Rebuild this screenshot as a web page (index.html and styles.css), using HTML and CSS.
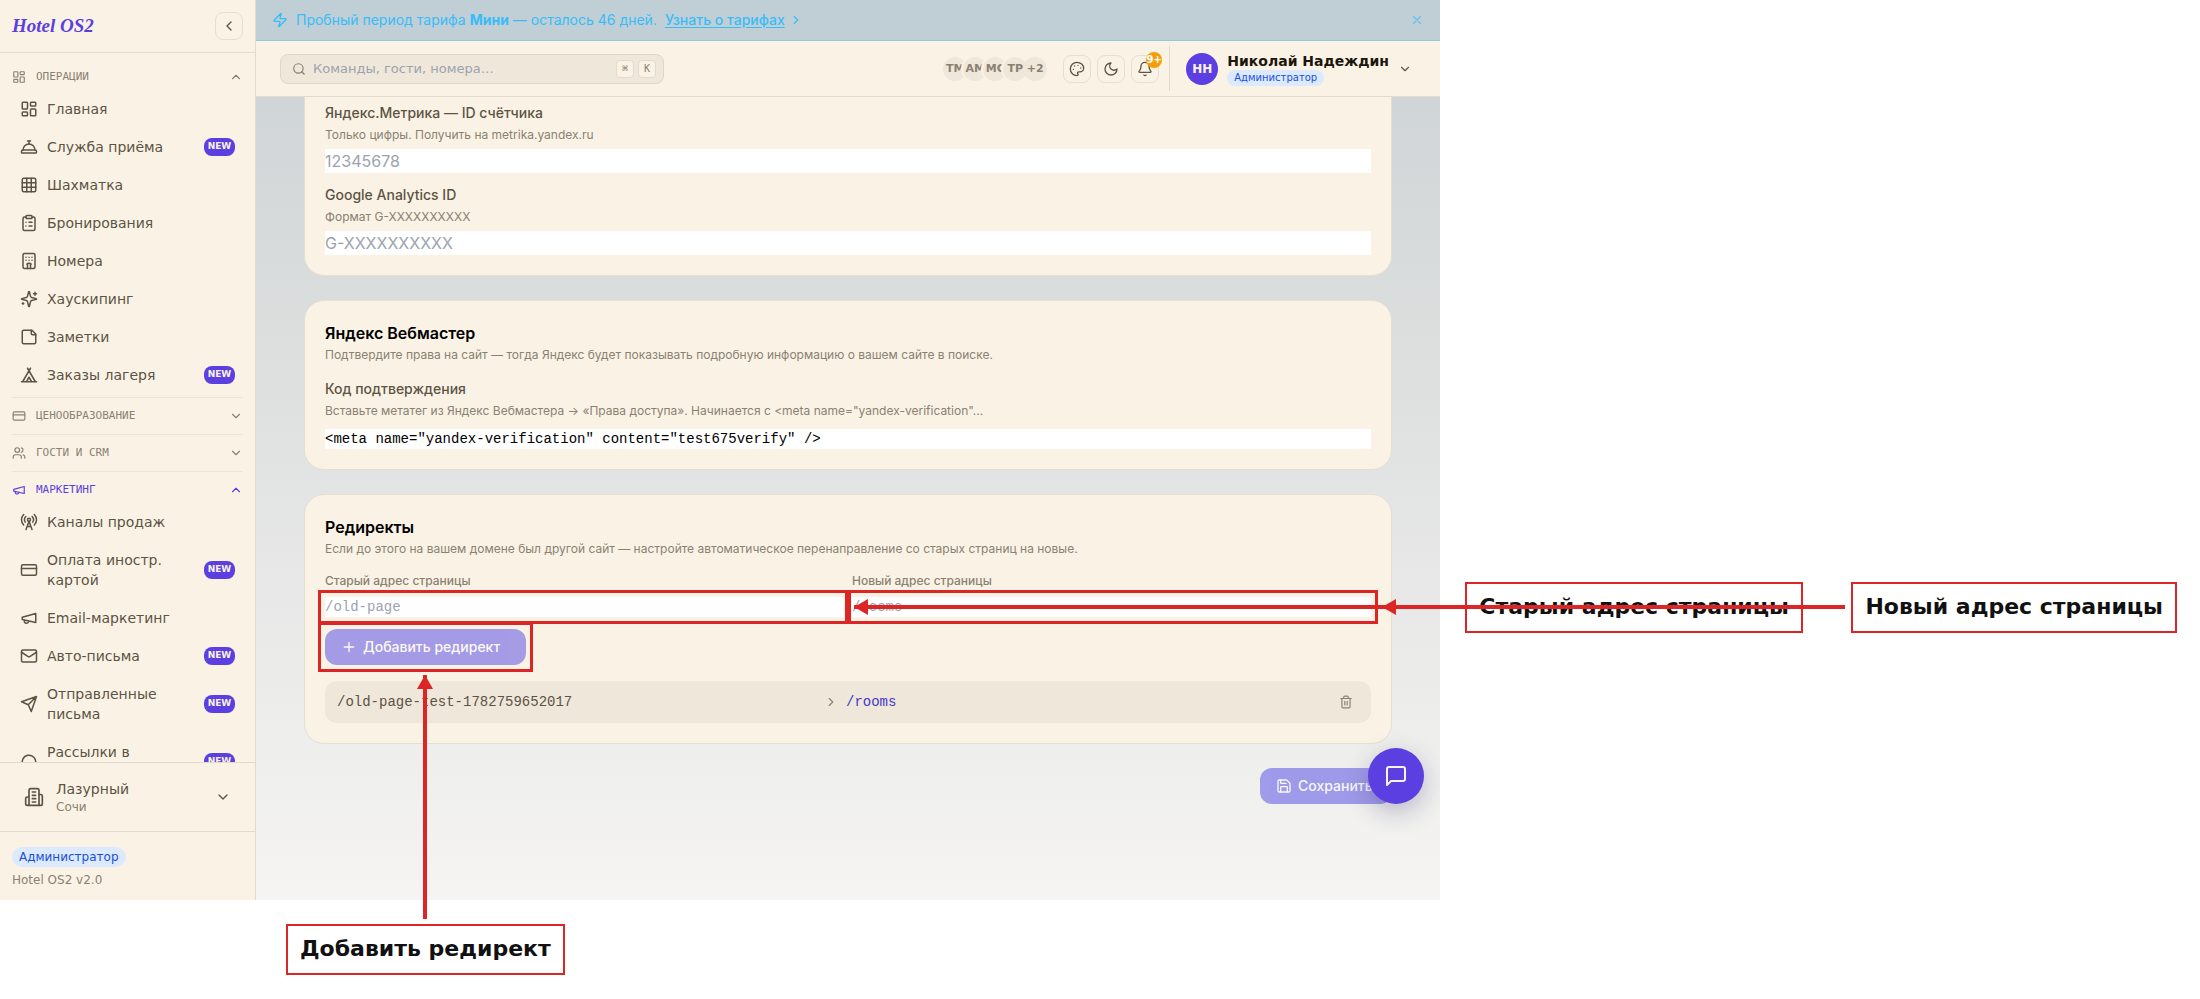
FILE: index.html
```html
<!DOCTYPE html>
<html lang="ru">
<head>
  <meta charset="UTF-8">
  <title>Hotel OS2</title>
  <link rel="stylesheet" href="styles.css">
</head>
<body>

<!-- icon set -->
<svg class="sprite" width="0" height="0" aria-hidden="true">
  <symbol id="i-dashboard" viewBox="0 0 24 24"><rect x="3" y="3" width="7" height="9" rx="1"/><rect x="14" y="3" width="7" height="5" rx="1"/><rect x="14" y="12" width="7" height="9" rx="1"/><rect x="3" y="16" width="7" height="5" rx="1"/></symbol>
  <symbol id="i-bell-service" viewBox="0 0 24 24"><path d="M3 20a1 1 0 0 1-1-1v-1a2 2 0 0 1 2-2h16a2 2 0 0 1 2 2v1a1 1 0 0 1-1 1Z"/><path d="M20 16a8 8 0 1 0-16 0"/><path d="M12 4v4"/><path d="M10 4h4"/></symbol>
  <symbol id="i-grid" viewBox="0 0 24 24"><rect x="3" y="3" width="18" height="18" rx="2"/><path d="M3 9h18M3 15h18M9 3v18M15 3v18"/></symbol>
  <symbol id="i-clipboard" viewBox="0 0 24 24"><rect x="8" y="2" width="8" height="4" rx="1"/><path d="M16 4h2a2 2 0 0 1 2 2v14a2 2 0 0 1-2 2H6a2 2 0 0 1-2-2V6a2 2 0 0 1 2-2h2"/><path d="M12 11h4M12 16h4M8 11h.01M8 16h.01"/></symbol>
  <symbol id="i-hotel" viewBox="0 0 24 24"><rect x="4" y="2" width="16" height="20" rx="2"/><path d="M10 22v-6.570M14 15.430V22M15 16a5 5 0 0 0-6 0"/><path d="M12 11h.01M12 7h.01M16 11h.01M16 7h.01M8 11h.01M8 7h.01"/></symbol>
  <symbol id="i-sparkles" viewBox="0 0 24 24"><path d="M9.937 15.500A2 2 0 0 0 8.500 14.063l-6.135-1.582a.5.5 0 0 1 0-.962L8.500 9.936A2 2 0 0 0 9.937 8.500l1.582-6.135a.5.5 0 0 1 .963 0L14.063 8.500A2 2 0 0 0 15.500 9.937l6.135 1.581a.5.5 0 0 1 0 .964L15.500 14.063a2 2 0 0 0-1.437 1.437l-1.582 6.135a.5.5 0 0 1-.963 0z"/><path d="M20 3v4M22 5h-4M4 17v2M5 18H3"/></symbol>
  <symbol id="i-note" viewBox="0 0 24 24"><path d="M16 3H5a2 2 0 0 0-2 2v14a2 2 0 0 0 2 2h14a2 2 0 0 0 2-2V8Z"/><path d="M15 3v4a2 2 0 0 0 2 2h4"/></symbol>
  <symbol id="i-tent" viewBox="0 0 24 24"><path d="M3.500 21 14 3M20.500 21 10 3M15.500 21 12 15l-3.500 6M2 21h20"/></symbol>
  <symbol id="i-card" viewBox="0 0 24 24"><rect x="2" y="5" width="20" height="14" rx="2"/><path d="M2 10h20"/></symbol>
  <symbol id="i-users" viewBox="0 0 24 24"><path d="M16 21v-2a4 4 0 0 0-4-4H6a4 4 0 0 0-4 4v2"/><circle cx="9" cy="7" r="4"/><path d="M22 21v-2a4 4 0 0 0-3-3.870M16 3.130a4 4 0 0 1 0 7.750"/></symbol>
  <symbol id="i-megaphone" viewBox="0 0 24 24"><path d="m3 11 18-5v12L3 14v-3z"/><path d="M11.600 16.800a3 3 0 1 1-5.800-1.600"/></symbol>
  <symbol id="i-tower" viewBox="0 0 24 24"><path d="M4.900 16.100C1 12.200 1 5.800 4.900 1.900M7.800 4.700a6.140 6.140 0 0 0-.8 7.500"/><circle cx="12" cy="9" r="2"/><path d="M16.200 4.800c2 2 2.260 5.110.8 7.470M19.100 1.900a9.960 9.960 0 0 1 0 14.100M9.500 18h5M8 22l4-11 4 11"/></symbol>
  <symbol id="i-mail" viewBox="0 0 24 24"><rect x="2" y="4" width="20" height="16" rx="2"/><path d="m22 7-8.970 5.700a1.940 1.940 0 0 1-2.060 0L2 7"/></symbol>
  <symbol id="i-send" viewBox="0 0 24 24"><path d="M22 2 11 13M22 2l-7 20-4-9-9-4z"/></symbol>
  <symbol id="i-message-circle" viewBox="0 0 24 24"><path d="M7.900 20A9 9 0 1 0 4 16.100L2 22Z"/></symbol>
  <symbol id="i-building" viewBox="0 0 24 24"><path d="M6 22V4a2 2 0 0 1 2-2h8a2 2 0 0 1 2 2v18Z"/><path d="M6 12H4a2 2 0 0 0-2 2v6a2 2 0 0 0 2 2h2M18 9h2a2 2 0 0 1 2 2v9a2 2 0 0 1-2 2h-2M10 6h4M10 10h4M10 14h4M10 18h4"/></symbol>
  <symbol id="i-zap" viewBox="0 0 24 24"><path d="M4 14a1 1 0 0 1-.780-1.630l9.900-10.200a.5.5 0 0 1 .860.460l-1.920 6.020A1 1 0 0 0 13 10h7a1 1 0 0 1 .780 1.630l-9.900 10.200a.5.5 0 0 1-.860-.460l1.920-6.020A1 1 0 0 0 11 14z"/></symbol>
  <symbol id="i-search" viewBox="0 0 24 24"><circle cx="11" cy="11" r="8"/><path d="m21 21-4.300-4.300"/></symbol>
  <symbol id="i-palette" viewBox="0 0 24 24"><path d="M13.500 6.500h.01M17.500 10.500h.01M8.500 7.500h.01M6.500 12.500h.01"/><path d="M12 2C6.500 2 2 6.500 2 12s4.500 10 10 10c.926 0 1.648-.746 1.648-1.688 0-.437-.180-.835-.437-1.125-.290-.289-.438-.652-.438-1.125a1.640 1.640 0 0 1 1.668-1.668h1.996c3.051 0 5.555-2.503 5.555-5.554C21.965 6.012 17.461 2 12 2z"/></symbol>
  <symbol id="i-moon" viewBox="0 0 24 24"><path d="M12 3a6 6 0 0 0 9 9 9 9 0 1 1-9-9Z"/></symbol>
  <symbol id="i-bell" viewBox="0 0 24 24"><path d="M10.268 21a2 2 0 0 0 3.464 0"/><path d="M3.262 15.326A1 1 0 0 0 4 17h16a1 1 0 0 0 .740-1.673C19.410 13.956 18 12.499 18 8A6 6 0 0 0 6 8c0 4.499-1.411 5.956-2.738 7.326"/></symbol>
  <symbol id="i-save" viewBox="0 0 24 24"><path d="M15.200 3a2 2 0 0 1 1.400.6l3.800 3.800a2 2 0 0 1 .6 1.400V19a2 2 0 0 1-2 2H5a2 2 0 0 1-2-2V5a2 2 0 0 1 2-2z"/><path d="M17 21v-7a1 1 0 0 0-1-1H8a1 1 0 0 0-1 1v7M7 3v4a1 1 0 0 0 1 1h7"/></symbol>
  <symbol id="i-trash" viewBox="0 0 24 24"><path d="M3 6h18M19 6v14a2 2 0 0 1-2 2H7a2 2 0 0 1-2-2V6M8 6V4a2 2 0 0 1 2-2h4a2 2 0 0 1 2 2v2M10 11v6M14 11v6"/></symbol>
  <symbol id="i-message" viewBox="0 0 24 24"><path d="M21 15a2 2 0 0 1-2 2H7l-4 4V5a2 2 0 0 1 2-2h14a2 2 0 0 1 2 2z"/></symbol>
  <symbol id="i-plus" viewBox="0 0 24 24"><path d="M5 12h14M12 5v14"/></symbol>
  <symbol id="i-x" viewBox="0 0 24 24"><path d="M18 6 6 18M6 6l12 12"/></symbol>
  <symbol id="i-up" viewBox="0 0 24 24"><path d="m18 15-6-6-6 6"/></symbol>
  <symbol id="i-down" viewBox="0 0 24 24"><path d="m6 9 6 6 6-6"/></symbol>
  <symbol id="i-left" viewBox="0 0 24 24"><path d="m15 18-6-6 6-6"/></symbol>
  <symbol id="i-right" viewBox="0 0 24 24"><path d="m9 18 6-6-6-6"/></symbol>
</svg>

<div class="sheet">
  <div class="app">

    <aside class="sidebar">
      <div class="brand">
        <a href="#" class="logo">Hotel OS2</a>
        <button type="button" class="icon-btn" aria-label="Свернуть меню"><svg class="icon s16"><use href="#i-left"/></svg></button>
      </div>

      <nav class="nav">
        <section class="nav-section">
          <button type="button" class="nav-head"><svg class="icon s14"><use href="#i-dashboard"/></svg><span>Операции</span><svg class="icon s14"><use href="#i-up"/></svg></button>
          <a href="#" class="nav-item"><svg class="icon s18"><use href="#i-dashboard"/></svg><span>Главная</span></a>
          <a href="#" class="nav-item"><svg class="icon s18"><use href="#i-bell-service"/></svg><span>Служба приёма</span><b class="new">NEW</b></a>
          <a href="#" class="nav-item"><svg class="icon s18"><use href="#i-grid"/></svg><span>Шахматка</span></a>
          <a href="#" class="nav-item"><svg class="icon s18"><use href="#i-clipboard"/></svg><span>Бронирования</span></a>
          <a href="#" class="nav-item"><svg class="icon s18"><use href="#i-hotel"/></svg><span>Номера</span></a>
          <a href="#" class="nav-item"><svg class="icon s18"><use href="#i-sparkles"/></svg><span>Хаускипинг</span></a>
          <a href="#" class="nav-item"><svg class="icon s18"><use href="#i-note"/></svg><span>Заметки</span></a>
          <a href="#" class="nav-item"><svg class="icon s18"><use href="#i-tent"/></svg><span>Заказы лагеря</span><b class="new">NEW</b></a>
        </section>

        <section class="nav-section">
          <button type="button" class="nav-head"><svg class="icon s14"><use href="#i-card"/></svg><span>Ценообразование</span><svg class="icon s14"><use href="#i-down"/></svg></button>
        </section>

        <section class="nav-section">
          <button type="button" class="nav-head"><svg class="icon s14"><use href="#i-users"/></svg><span>Гости и CRM</span><svg class="icon s14"><use href="#i-down"/></svg></button>
        </section>

        <section class="nav-section">
          <button type="button" class="nav-head active"><svg class="icon s14"><use href="#i-megaphone"/></svg><span>Маркетинг</span><svg class="icon s14"><use href="#i-up"/></svg></button>
          <a href="#" class="nav-item"><svg class="icon s18"><use href="#i-tower"/></svg><span>Каналы продаж</span></a>
          <a href="#" class="nav-item"><svg class="icon s18"><use href="#i-card"/></svg><span>Оплата иностр. картой</span><b class="new">NEW</b></a>
          <a href="#" class="nav-item"><svg class="icon s18"><use href="#i-megaphone"/></svg><span>Email-маркетинг</span></a>
          <a href="#" class="nav-item"><svg class="icon s18"><use href="#i-mail"/></svg><span>Авто-письма</span><b class="new">NEW</b></a>
          <a href="#" class="nav-item"><svg class="icon s18"><use href="#i-send"/></svg><span>Отправленные письма</span><b class="new">NEW</b></a>
          <a href="#" class="nav-item nav-item-tall"><svg class="icon s18"><use href="#i-message-circle"/></svg><span>Рассылки в</span><b class="new">NEW</b></a>
        </section>
      </nav>

      <button type="button" class="property">
        <svg class="icon s20"><use href="#i-building"/></svg>
        <span class="property-text">Лазурный<small>Сочи</small></span>
        <svg class="icon s16"><use href="#i-down"/></svg>
      </button>

      <div class="side-footer">
        <span class="role">Администратор</span>
        <span class="version">Hotel OS2 v2.0</span>
      </div>
    </aside>

    <div class="content">
      <div class="banner">
        <svg class="icon s16"><use href="#i-zap"/></svg>
        <span>Пробный период тарифа <strong>Мини</strong> — осталось 46 дней.</span>
        <a href="#">Узнать о тарифах</a>
        <svg class="icon s14"><use href="#i-right"/></svg>
        <button type="button" class="banner-close" aria-label="Закрыть"><svg class="icon s14"><use href="#i-x"/></svg></button>
      </div>

      <header class="topbar">
        <label class="search">
          <svg class="icon s14"><use href="#i-search"/></svg>
          <input type="text" placeholder="Команды, гости, номера…" aria-label="Поиск">
          <kbd>⌘</kbd><kbd>K</kbd>
        </label>
        <div class="team">
          <span>ТМ</span><span>АМ</span><span>МС</span><span>ТР</span><span>+2</span>
        </div>
        <div class="tools">
          <button type="button" class="icon-btn" aria-label="Тема"><svg class="icon s16"><use href="#i-palette"/></svg></button>
          <button type="button" class="icon-btn" aria-label="Ночной режим"><svg class="icon s16"><use href="#i-moon"/></svg></button>
          <button type="button" class="icon-btn" aria-label="Уведомления"><svg class="icon s16"><use href="#i-bell"/></svg><span class="count">9+</span></button>
        </div>
        <button type="button" class="user">
          <span class="avatar">НН</span>
          <span class="user-text"><strong>Николай Надеждин</strong><span class="role role-sm">Администратор</span></span>
          <svg class="icon s14"><use href="#i-down"/></svg>
        </button>
      </header>

      <main class="main">
        <section class="card card-cut">
          <div class="field">
            <label for="metrika">Яндекс.Метрика — ID счётчика</label>
            <p class="hint">Только цифры. Получить на metrika.yandex.ru</p>
            <input type="text" id="metrika" placeholder="12345678">
          </div>
          <div class="field">
            <label for="ga">Google Analytics ID</label>
            <p class="hint">Формат G-XXXXXXXXXX</p>
            <input type="text" id="ga" placeholder="G-XXXXXXXXXX">
          </div>
        </section>

        <section class="card">
          <h2>Яндекс Вебмастер</h2>
          <p class="hint">Подтвердите права на сайт — тогда Яндекс будет показывать подробную информацию о вашем сайте в поиске.</p>
          <div class="field field-code">
            <label for="verify">Код подтверждения</label>
            <p class="hint">Вставьте метатег из Яндекс Вебмастера → «Права доступа». Начинается с &lt;meta name="yandex-verification"...</p>
            <input type="text" id="verify" class="code" value='&lt;meta name="yandex-verification" content="test675verify" /&gt;'>
          </div>
        </section>

        <section class="card">
          <h2>Редиректы</h2>
          <p class="hint">Если до этого на вашем домене был другой сайт — настройте автоматическое перенаправление со старых страниц на новые.</p>
          <div class="pair">
            <div>
              <label for="from">Старый адрес страницы</label>
              <input type="text" id="from" class="code marked" placeholder="/old-page">
            </div>
            <div>
              <label for="to">Новый адрес страницы</label>
              <input type="text" id="to" class="code marked" placeholder="/rooms">
            </div>
          </div>
          <span class="add marked"><button type="button" class="btn btn-add" disabled><svg class="icon s16"><use href="#i-plus"/></svg>Добавить редирект</button></span>
          <div class="redirect">
            <span>/old-page-test-1782759652017</span>
            <svg class="icon s14"><use href="#i-right"/></svg>
            <span class="target">/rooms</span>
            <button type="button" aria-label="Удалить"><svg class="icon s14"><use href="#i-trash"/></svg></button>
          </div>
        </section>

        <div class="actions">
          <button type="button" class="btn" disabled><svg class="icon s16"><use href="#i-save"/></svg>Сохранить</button>
        </div>
        <button type="button" class="chat" aria-label="Чат"><svg class="icon s24"><use href="#i-message"/></svg></button>
      </main>
    </div>
  </div>

  <!-- callouts drawn over the screen -->
  <div class="callout callout-old">Старый адрес страницы</div>
  <div class="callout callout-new">Новый адрес страницы</div>
  <div class="callout callout-add">Добавить редирект</div>
  <div class="arrow arrow-old"></div>
  <div class="arrow arrow-new"></div>
  <div class="arrow-up"></div>
</div>

</body>
</html>
```

FILE: styles.css
```css
* {
  box-sizing: border-box;
}
body {
  margin: 0;
  background: #fff;
  color: #000;
  font-family: Inter, sans-serif;
  font-size: 14px;
  line-height: 20px;
}
button, input {
  font: inherit;
  color: inherit;
  border: none;
  margin: 0;
  padding: 0;
  background: none;
}
a {
  color: inherit;
  text-decoration: none;
}
h2, p {
  margin: 0;
}
.sprite {
  position: absolute;
}
.icon {
  flex: none;
  display: block;
  fill: none;
  stroke: currentColor;
  stroke-width: 2;
  stroke-linecap: round;
  stroke-linejoin: round;
}
.s14 { width: 14px; height: 14px; }
.s16 { width: 16px; height: 16px; }
.s18 { width: 18px; height: 18px; }
.s20 { width: 20px; height: 20px; }
.s24 { width: 24px; height: 24px; }

/* the app leaves a margin on the right and below for the callouts */
.sheet {
  position: relative;
  height: 100vh;
  padding: 0 760px 99px 0;
  overflow: hidden;
}
.app {
  display: flex;
  height: 100%;
  background: linear-gradient(#cbd1d5, #d8dbdb 28%, #f5f4f2);
}

/* sidebar */
.sidebar {
  width: 256px;
  flex: none;
  display: flex;
  flex-direction: column;
  background: #faf3e5;
  border-right: 1px solid #e2dacb;
  color: #5c5344;
  font-family: "DejaVu Sans", sans-serif;
}
.brand {
  display: flex;
  align-items: center;
  justify-content: space-between;
  padding: 12px;
  border-bottom: 1px solid #e2dacb;
}
.logo {
  font: italic bold 19px/24px "Liberation Serif", serif;
  color: #5b3fe0;
}
.icon-btn {
  position: relative;
  display: flex;
  align-items: center;
  justify-content: center;
  width: 28px;
  height: 28px;
  border: 1px solid #e6decf;
  border-radius: 8px;
}
.nav {
  flex: 1;
  min-height: 0;
  overflow: hidden;
  padding: 6px 12px 0;
}
.nav-section {
  display: flex;
  flex-direction: column;
  gap: 2px;
  padding-bottom: 4px;
}
.nav-section + .nav-section {
  border-top: 1px solid #ece4d6;
}
.nav-head {
  display: flex;
  align-items: center;
  gap: 10px;
  height: 30px;
  padding-top: 5px;
  color: #8a8172;
  font: 11px/14px "DejaVu Sans Mono", monospace;
  text-transform: uppercase;
}
.nav-head span {
  flex: 1;
  text-align: left;
}
.nav-head.active {
  color: #5b3fe0;
}
.nav-section:not(:has(.nav-item)) {
  padding-bottom: 6px;
}
.nav-item {
  display: flex;
  align-items: center;
  gap: 9px;
  padding: 8px;
}
.nav-item span {
  flex: 1;
}
.nav-item-tall span {
  min-height: 40px;
}
.new {
  width: 31px;
  height: 18px;
  border-radius: 8px;
  background: #5b3fe0;
  color: #faf3e5;
  font-size: 9px;
  line-height: 16px;
  text-align: center;
}
.property {
  display: flex;
  align-items: center;
  gap: 12px;
  height: 69px;
  padding: 0 24px;
  border-top: 1px solid #e2dacb;
}
.property-text {
  flex: 1;
  text-align: left;
}
.property small {
  display: block;
  font-size: 12px;
  line-height: 16px;
  color: #8a8172;
}
.side-footer {
  display: flex;
  flex-direction: column;
  align-items: flex-start;
  gap: 5px;
  padding: 15px 12px 12px;
  border-top: 1px solid #e2dacb;
}
.role {
  padding: 0 7px;
  border-radius: 10px;
  background: #dbeafe;
  color: #1d4ed8;
  font-size: 12px;
}
.role-sm {
  font-size: 10px;
  line-height: 16px;
}
.version {
  font-size: 12px;
  line-height: 16px;
  color: #8a8172;
}

/* banner and top bar */
.content {
  flex: 1;
  min-width: 0;
  display: flex;
  flex-direction: column;
}
.banner {
  display: flex;
  align-items: center;
  gap: 8px;
  height: 41px;
  padding: 0 16px;
  border-bottom: 1px solid #8ec9e4;
  background: #c0ced5;
  color: #38bdf8;
}
.banner a {
  font-weight: 500;
  text-decoration: underline;
  text-underline-offset: 2px;
}
.banner a + .icon {
  margin-left: -4px;
}
.banner-close {
  margin-left: auto;
  opacity: .7;
}
.topbar {
  display: flex;
  align-items: center;
  height: 56px;
  padding: 0 24px;
  background: #faf3e5;
  border-bottom: 1px solid #e2dacb;
  color: #5c5344;
  font-family: "DejaVu Sans", sans-serif;
}
.search {
  display: flex;
  align-items: center;
  gap: 4px;
  width: 384px;
  height: 30px;
  padding: 0 7px 0 11px;
  border: 1px solid #ddd5c7;
  border-radius: 8px;
  background: #efe7da;
  color: #8a8172;
}
.search input {
  flex: 1;
  min-width: 0;
  padding-left: 3px;
  font-size: 13px;
}
::placeholder {
  color: #9ca3af;
  opacity: 1;
}
kbd {
  width: 18px;
  height: 18px;
  border: 1px solid #e2dacb;
  border-radius: 4px;
  background: #faf3e5;
  font: 10px/16px "DejaVu Sans Mono", monospace;
  text-align: center;
}
.team {
  display: flex;
  margin-left: auto;
  margin-right: 16px;
}
.team span {
  width: 24px;
  height: 24px;
  border-radius: 50%;
  background: #efe7da;
  box-shadow: 0 0 0 2px #faf3e5;
  color: #8a8172;
  font-size: 11px;
  font-weight: bold;
  line-height: 24px;
  text-align: center;
}
.team span + span {
  margin-left: -4px;
}
.team span:last-child {
  box-shadow: none;
}
.tools {
  display: flex;
  gap: 6px;
}
.count {
  position: absolute;
  top: -4px;
  right: -4px;
  width: 16px;
  height: 16px;
  border-radius: 50%;
  background: #f59e0b;
  color: #fff;
  font-size: 10px;
  font-weight: bold;
  line-height: 16px;
}
.user {
  display: flex;
  align-items: center;
  gap: 9px;
  height: 45px;
  margin-left: 10px;
  padding: 0 4px 0 16px;
  border-left: 1px solid #e2dacb;
}
.avatar {
  width: 32px;
  height: 32px;
  border-radius: 50%;
  background: #5b3fe0;
  color: #faf3e5;
  font-size: 12px;
  font-weight: bold;
  line-height: 32px;
}
.user-text {
  display: flex;
  flex-direction: column;
  align-items: flex-start;
}
.user-text strong {
  color: #1c160d;
  line-height: 18px;
}

/* settings page */
.main {
  position: relative;
  flex: 1;
  min-height: 0;
  overflow: hidden;
  display: flex;
  flex-direction: column;
  gap: 24px;
  padding: 0 48px;
}
.card {
  flex: none;
  padding: 20px;
  border: 1px solid #e6decf;
  border-radius: 20px;
  background: #faf3e5;
}
.card-cut {
  display: flex;
  flex-direction: column;
  gap: 12px;
  padding-top: 6px;
  border-top: none;
  border-radius: 0 0 20px 20px;
}
h2 {
  margin-bottom: 2px;
  font-size: 16px;
  font-weight: 600;
  line-height: 24px;
}
.hint {
  font-size: 12px;
  line-height: 16px;
  color: #8a8172;
}
.field {
  display: flex;
  flex-direction: column;
}
.field label {
  margin-bottom: 4px;
  font-weight: 500;
  color: #5c5344;
}
.field input {
  height: 24px;
  margin-top: 6px;
  background: #fff;
  font-size: 16px;
}
.field-code {
  margin-top: 16px;
}
.code,
.field .code {
  width: 100%;
  height: 20px;
  background: #fff;
  font-family: "Liberation Mono", monospace;
  font-size: 14px;
}
.field .code {
  margin-top: 10px;
}
.pair {
  display: grid;
  grid-template-columns: 1fr 1fr;
  gap: 8px;
  margin: 16px 0 12px;
}
.pair label,
.pair input {
  display: block;
}
.pair label {
  margin-bottom: 8px;
  font-size: 12px;
  font-weight: 500;
  line-height: 16px;
  color: #8a8172;
}
.marked {
  outline: 3px solid #dc2626;
  outline-offset: 4px;
}
.add {
  display: block;
  width: fit-content;
}
.btn {
  display: flex;
  align-items: center;
  gap: 6px;
  min-width: 132px;
  height: 36px;
  padding: 0 16px;
  border-radius: 12px;
  background: #4f46e5;
  color: #fff;
  font-weight: 500;
  opacity: .5;
}
.btn-add {
  min-width: 201px;
}
.redirect {
  display: flex;
  align-items: center;
  gap: 8px;
  margin-top: 16px;
  padding: 8px 12px;
  border-radius: 12px;
  background: #efe7da;
  color: #5c5344;
  font-family: "Liberation Mono", monospace;
}
.redirect span {
  flex: 1;
}
.redirect .target {
  color: #4338ca;
}
.redirect button {
  padding: 6px;
}
.redirect .icon {
  color: #8a8172;
}
.actions {
  display: flex;
  justify-content: flex-end;
}
.chat {
  position: absolute;
  right: 16px;
  bottom: 96px;
  display: flex;
  align-items: center;
  justify-content: center;
  width: 56px;
  height: 56px;
  border-radius: 50%;
  background: #5b3fe0;
  color: #faf3e5;
  box-shadow: 0 8px 24px rgba(60, 50, 110, .3);
}

/* callouts */
.callout {
  position: absolute;
  padding: 11px 12px 12px;
  border: 2px solid #dc2626;
  background: #fff;
  color: #111;
  font: bold 22px/24px "DejaVu Sans", sans-serif;
  white-space: nowrap;
}
.callout-old {
  top: 582px;
  right: 397px;
}
.callout-new {
  top: 582px;
  right: 23px;
}
.callout-add {
  left: 286px;
  bottom: 24px;
}
.arrow {
  position: absolute;
  top: 605px;
  height: 4px;
  background: #dc2626;
}
.arrow::before {
  content: "";
  position: absolute;
  left: 0;
  top: -6px;
  border: 8px solid transparent;
  border-left: none;
  border-right: 14px solid #dc2626;
}
.arrow-old {
  left: calc(100% - 818px);
  right: 737px;
}
.arrow-new {
  left: 854px;
  right: 355px;
}
.arrow-up {
  position: absolute;
  top: 675px;
  bottom: 80px;
  left: 423px;
  width: 4px;
  background: #dc2626;
}
.arrow-up::before {
  content: "";
  position: absolute;
  top: 0;
  left: -6px;
  border: 8px solid transparent;
  border-top: none;
  border-bottom: 14px solid #dc2626;
}
```
